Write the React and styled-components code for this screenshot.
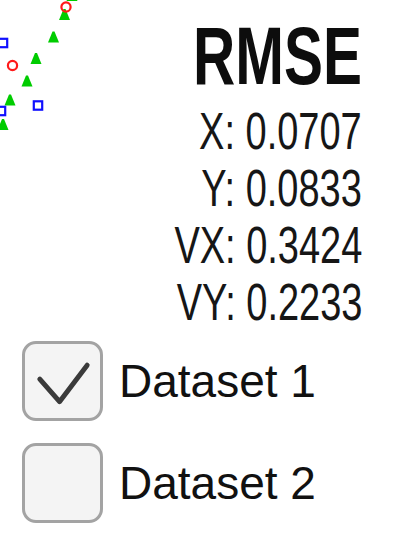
import { useState } from "react"
import styled, { createGlobalStyle } from "styled-components"

const GlobalStyle = createGlobalStyle`
    html, body {
        margin: 0;
        padding: 0;
        background: #ffffff;
    }
    body {
        font-family: "Liberation Sans", Arial, sans-serif;
    }
`

const circles = [
    { x: 66, y: 7 },
    { x: 12.5, y: 65.5 },
]

const triangles = [
    { x: 72, y: 1 },
    { x: 64.5, y: 20 },
    { x: 53.5, y: 42.5 },
    { x: 36, y: 64 },
    { x: 27, y: 86.5 },
    { x: 10, y: 105.5 },
    { x: 3, y: 130 },
]

const squares = [
    { x: 3, y: 43 },
    { x: 38, y: 105.5 },
    { x: 1, y: 111 },
]

const stats = [
    { label: "X", value: "0.0707" },
    { label: "Y", value: "0.0833" },
    { label: "VX", value: "0.3424" },
    { label: "VY", value: "0.2233" },
]

const Scatter = () => (
    <Plot width="90" height="135" viewBox="0 0 90 135">
        {triangles.map(({ x, y }, i) => (
            <polygon
                key={`t${i}`}
                points={`${x - 1},${y - 11} ${x + 1},${y - 11} ${x + 5.5},${y} ${x - 5.5},${y}`}
                fill="#00cc00"
            />
        ))}
        {circles.map(({ x, y }, i) => (
            <circle key={`c${i}`} cx={x} cy={y} r="4.6" fill="none" stroke="#ff1a1a" strokeWidth="2.2" />
        ))}
        {squares.map(({ x, y }, i) => (
            <rect key={`s${i}`} x={x - 4.2} y={y - 4.2} width="8.4" height="8.4" fill="none" stroke="#1010ff" strokeWidth="2.2" />
        ))}
    </Plot>
)

const DatasetToggle = ({ label, checked, onToggle }) => (
    <Row onClick={onToggle}>
        <Box role="checkbox" aria-checked={checked}>
            {checked && (
                <svg width="76" height="75" viewBox="0 0 76 75">
                    <polyline
                        points="15,35 35,58 63,21"
                        fill="none"
                        stroke="#3a3a3a"
                        strokeWidth="5"
                        strokeLinecap="round"
                        strokeLinejoin="round"
                    />
                </svg>
            )}
        </Box>
        <Label>{label}</Label>
    </Row>
)

export default function App() {
    const [shown, setShown] = useState({ one: true, two: false })

    return <Page>
        <GlobalStyle />
        <Scatter />
        <Stats>
            <Title>RMSE</Title>
            {stats.map(({ label, value }) => (
                <StatLine key={label}>{`${label}: ${value}`}</StatLine>
            ))}
        </Stats>
        <Toggles>
            <DatasetToggle
                label="Dataset 1"
                checked={shown.one}
                onToggle={() => setShown(s => ({ ...s, one: !s.one }))}
            />
            <DatasetToggle
                label="Dataset 2"
                checked={shown.two}
                onToggle={() => setShown(s => ({ ...s, two: !s.two }))}
            />
        </Toggles>
    </Page>
}

const Page = styled.main`
    position: relative;
    width: 400px;
    height: 536px;
    overflow: hidden;
    background: #ffffff;
    display: flex;
    flex-direction: column;
`
const Plot = styled.svg`
    position: absolute;
    top: 0;
    left: 0;
    overflow: visible;
`
const Stats = styled.section`
    display: flex;
    flex-direction: column;
    align-items: flex-end;
    padding: 16px 38px 0 0;
    color: #161616;
`
const Title = styled.div`
    font-size: 81px;
    font-weight: 700;
    line-height: 81px;
    color: #0d0d0d;
    margin-bottom: 6px;
    transform: scaleX(0.722);
    transform-origin: right center;
    white-space: nowrap;
`
const StatLine = styled.div`
    font-size: 52px;
    line-height: 57px;
    transform: scaleX(0.73);
    transform-origin: right center;
    white-space: nowrap;
`
const Toggles = styled.section`
    display: flex;
    flex-direction: column;
    gap: 22px;
    padding: 10px 0 0 22px;
`
const Row = styled.div`
    display: flex;
    align-items: center;
    gap: 16px;
    cursor: pointer;
    user-select: none;
`
const Box = styled.div`
    box-sizing: border-box;
    width: 81px;
    height: 80px;
    border: 3px solid #a3a3a3;
    border-radius: 14px;
    background: #f4f4f4;
    display: flex;
    align-items: center;
    justify-content: center;
`
const Label = styled.span`
    font-size: 46px;
    color: #111111;
    white-space: nowrap;
`
